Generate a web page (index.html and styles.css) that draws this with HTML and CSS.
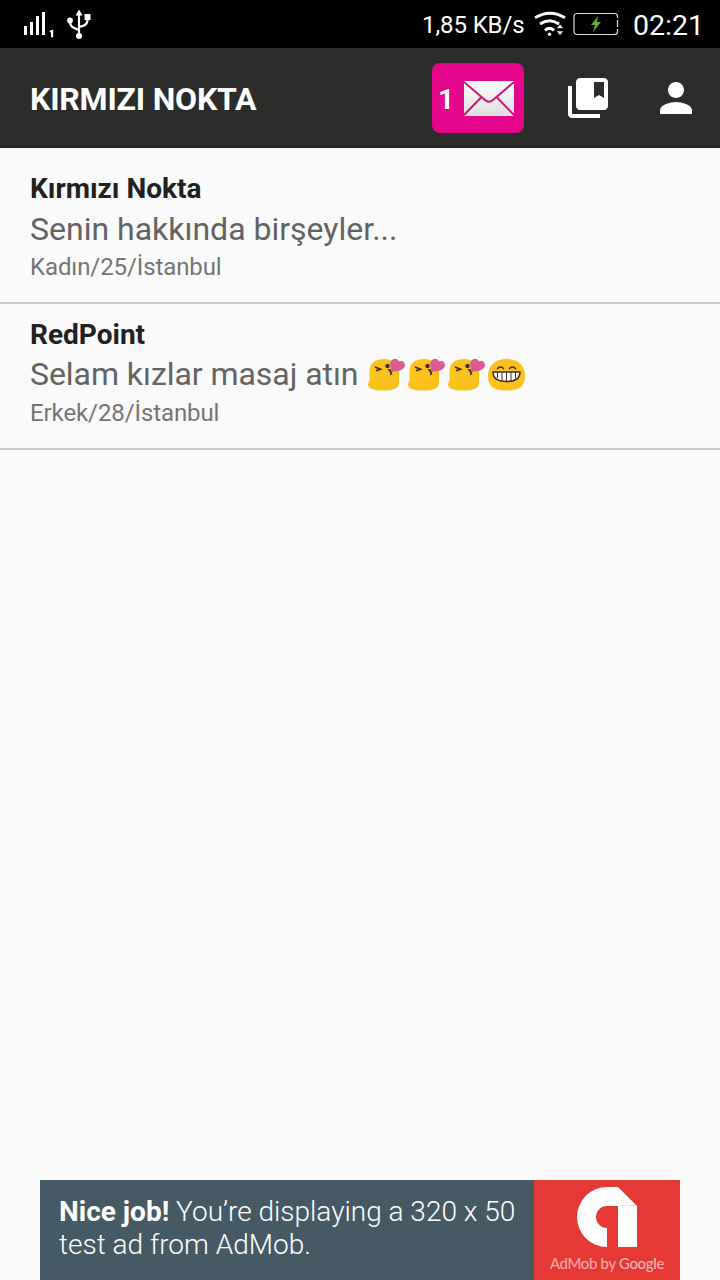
FILE: index.html
```
<!DOCTYPE html>
<html lang="tr">
    <head>
        <meta charset="utf-8">
        <title>Kırmızı Nokta</title>
        <link rel="stylesheet" href="styles.css">
    </head>

    <body>
        <svg width="0" height="0" class="defs">
            <symbol id="kiss" viewBox="0 0 40 34">
                <path fill="#fcc21b" d="M17 1C8 1 2.500 5 2.500 14v9c0 1-1.500 1-1.500 3 0 5 6 6.500 15 6.500S32 31 32 25V15C32 6 26 1 17 1z"/>
                <path fill="none" stroke="#3b2e26" stroke-width="1.600" d="M8 9l5.500 2.200-4.500 1.600M21 12q4-.5 2.200 1.800q2.500 1 0 3.200"/>
                <circle cx="20.500" cy="8" r="2.200" fill="#3b2e26"/>
                <path fill="#dc5b91" d="M25.500 14C23 9 22 4 25 2c2.500-2 6-1.500 7 1.500 3-1.500 6 .5 6 3.500C38 11 33 13 25.500 14z"/>
            </symbol>
        </svg>

        <div class="statusbar">
            <svg class="signal" width="30" height="28" viewBox="0 0 30 28">
                <path fill="#fff" d="M0 16h3v9H0zM6 12h3v13H6zM12 6h3v19h-3zM18 2h3v23h-3zM25.500 21l2.500-1.300h1.200V27.300h-2.200v-5h-1.500z"/>
            </svg>
            <svg class="usb" width="24" height="31" viewBox="0 0 24 31">
                <path fill="none" stroke="#fff" stroke-width="2.200" d="M12 4v23M3 11v2c0 5 4 6 9 8M20.500 8v3c0 5-4 6-8.500 7"/>
                <path fill="#fff" d="M12 .5l3.500 6h-7zM17.500 5h6v6h-6z"/>
                <circle cx="3" cy="11.500" r="2.900" fill="#fff"/>
                <circle cx="12" cy="27" r="3" fill="#fff"/>
            </svg>
            <span class="speed">1,85 KB/s</span>
            <svg class="wifi" width="32" height="26" viewBox="0 0 32 26">
                <path fill="none" stroke="#fff" stroke-width="2.900" d="M1 6.800q15-9 30 0M6 13q9.500-6.500 19 0M11 19.300q4.500-4 9 0"/>
                <circle cx="15.500" cy="23.300" r="1.700" fill="#fff"/>
                <path fill="#fff" stroke="#000" stroke-width=".6" d="M22.500 17.500l3.500-4.500 3.500 4.500zM22.500 20h7L26 24.500z"/>
            </svg>
            <svg class="battery" width="46" height="24" viewBox="0 0 46 24">
                <rect x="1" y="1.500" width="43.500" height="21" rx="3" fill="none" stroke="#ddd" stroke-width="1.200"/>
                <path stroke="#000" stroke-width="2" d="M44.500 6v2M44.500 15v2"/>
                <path fill="#60ad3b" d="M25 4l-7 9h4l-2 7 8-10h-4z"/>
            </svg>
            <span class="clock">02:21</span>
        </div>

        <div class="toolbar">
            <h1>KIRMIZI NOKTA</h1>
            <div class="inbox">
                <span>1</span>
                <svg width="50" height="35" viewBox="0 0 50 35">
                    <defs>
                        <linearGradient id="paper" x2="0" y2="1">
                            <stop offset="0" stop-color="#fff"/>
                            <stop offset="1" stop-color="#ddd"/>
                        </linearGradient>
                    </defs>
                    <rect width="50" height="35" rx="1" fill="url(#paper)"/>
                    <path fill="none" stroke="#c9177f" stroke-width="2" d="M0 1l21 18q4 3.500 8 0L50 1M0 34l17-17.500M50 34L33 16.500"/>
                </svg>
            </div>
            <svg class="books" width="48" height="48" viewBox="0 0 24 24">
                <path fill="#fff" d="M4 6H2v14c0 1.100.9 2 2 2h14v-2H4V6z"/>
                <path fill="#fff" d="M20 2H8c-1.100 0-2 .9-2 2v12c0 1.100.9 2 2 2h12c1.100 0 2-.9 2-2V4c0-1.100-.9-2-2-2zm0 10l-2.500-1.500L15 12V4h5v8z"/>
            </svg>
            <svg class="person" width="48" height="48" viewBox="0 0 24 24">
                <path fill="#fff" d="M12 12c2.210 0 4-1.790 4-4s-1.790-4-4-4-4 1.790-4 4 1.790 4 4 4zm0 2c-2.670 0-8 1.340-8 4v2h16v-2c0-2.660-5.330-4-8-4z"/>
            </svg>
        </div>

        <div class="list">
            <div class="row">
                <div class="name">Kırmızı Nokta</div>
                <div class="message">Senin hakkında birşeyler...</div>
                <div class="meta">Kadın/25/İstanbul</div>
            </div>
            <div class="row">
                <div class="name">RedPoint</div>
                <div class="message selam">
                    <span>Selam kızlar masaj atın</span>
                    <svg width="40" height="34"><use href="#kiss"/></svg>
                    <svg width="40" height="34"><use href="#kiss"/></svg>
                    <svg width="40" height="34"><use href="#kiss"/></svg>
                    <svg width="40" height="34" viewBox="0 0 40 34">
                        <path fill="#fcc21b" d="M19.500 1C8 1 1 8 1 18s5 14.500 18.500 14.500S38 28 38 18 31 1 19.500 1z"/>
                        <path fill="none" stroke="#3b2e26" stroke-width="1.300" d="M10 11q3.500-4 7 0M22 11q3.500-4 7 0"/>
                        <path fill="#fff" stroke="#3b2e26" stroke-width="1.500" d="M6 14h27q0 9.500-13.500 9.500T6 14z"/>
                        <path stroke="#3b2e26" stroke-width="1" d="M10.500 14v6M15 14v9M19.500 14v9.500M24 14v9M28.500 14v6"/>
                    </svg>
                </div>
                <div class="meta">Erkek/28/İstanbul</div>
            </div>
        </div>

        <div class="ad">
            <div class="ad-text"><b>Nice job!</b> You’re displaying a 320 x 50<br>test ad from AdMob.</div>
            <div class="ad-logo">
                <svg width="60" height="60" viewBox="0 0 60 60">
                    <path fill="#fff" d="M30 60A30 30 0 0 1 30 0H41L60 19V60H41V19H30A11 11 0 0 0 30 41z"/>
                    <path fill="#ddd" d="M41 19h19l-2-1.500z"/>
                </svg>
                <div class="by">AdMob by <b>Google</b></div>
            </div>
        </div>
    </body>
</html>
```
FILE: styles.css
```
* {
  box-sizing: border-box;
}
body {
  margin: 0;
  height: 1280px;
  display: flex;
  flex-direction: column;
  background-color: #fafafa;
  font-family: Roboto, sans-serif;
  overflow: hidden;
}
svg {
  display: block;
  flex: none;
}
.defs {
  position: absolute;
}
.statusbar {
  height: 48px;
  flex: none;
  display: flex;
  align-items: center;
  padding-left: 24px;
  background-color: #000;
  color: #fff;
  white-space: nowrap;
}
.usb {
  margin-left: 13px;
}
.speed {
  width: 103px;
  margin-left: 331px;
  font-size: 24px;
  letter-spacing: -0.1px;
  line-height: 48px;
  padding-top: 2px;
}
.wifi {
  margin-left: 9px;
}
.battery {
  margin-left: 7px;
}
.clock {
  margin-left: 14px;
  font-size: 28.500px;
  line-height: 48px;
  padding-top: 3px;
}
.toolbar {
  height: 100px;
  flex: none;
  display: flex;
  align-items: center;
  padding: 2px 0 0 30px;
  background-color: #2c2c2a;
  border-bottom: 2px solid #252523;
  color: #fff;
}
h1 {
  width: 402px;
  margin: 0;
  padding-top: 2px;
  font-size: 32px;
  letter-spacing: -0.2px;
  white-space: nowrap;
}
.inbox {
  width: 92px;
  height: 70px;
  display: flex;
  align-items: center;
  justify-content: space-between;
  padding: 0 10px 0 6px;
  border-radius: 8px;
  background-color: #e3058a;
  font-size: 28px;
  font-weight: bold;
}
.inbox span {
  padding-top: 2px;
}
.books {
  margin-left: 40px;
}
.person {
  margin-left: 40px;
}
.list {
  flex: 1;
  padding-top: 10px;
}
.row {
  height: 146px;
  padding: 13px 30px 0;
  border-bottom: 2px solid #c8c8c8;
  white-space: nowrap;
}
.name {
  font-size: 28px;
  font-weight: bold;
  line-height: 36px;
  color: #212121;
}
.message {
  font-size: 32px;
  line-height: 44px;
  color: #636363;
}
.selam {
  height: 44px;
  display: flex;
  align-items: center;
}
.selam span {
  width: 337px;
  padding-bottom: 2px;
  letter-spacing: -0.05px;
}
.meta {
  font-size: 24px;
  letter-spacing: -0.1px;
  line-height: 33px;
  color: #757575;
}
.ad {
  width: 640px;
  height: 100px;
  flex: none;
  display: flex;
  margin: 0 auto;
  background-color: #455a64;
  color: #fff;
}
.ad-text {
  width: 494px;
  padding: 15px 0 0 19px;
  font-size: 28px;
  font-weight: 300;
  line-height: 33px;
  white-space: nowrap;
}
.ad-text b {
  font-weight: 700;
}
.ad-logo {
  width: 146px;
  display: flex;
  flex-direction: column;
  align-items: center;
  padding-top: 7px;
  background-color: #e53935;
}
.by {
  margin-top: 6px;
  font-family: Lato, sans-serif;
  font-size: 15px;
  letter-spacing: -0.35px;
  line-height: 20px;
  color: #f7b0ae;
  white-space: nowrap;
}
.by b {
  font-weight: 500;
}
```
